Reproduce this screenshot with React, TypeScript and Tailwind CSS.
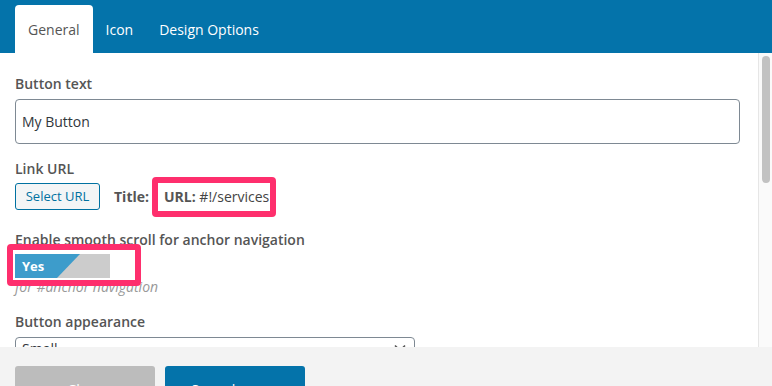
import React from 'react';

const tabs = ['General', 'Icon', 'Design Options'];

export default function App() {
  return (
    <div className="h-[386px] w-[772px] overflow-hidden bg-white flex flex-col font-['Open_Sans',sans-serif] text-[14px]">
      {/* Tabs */}
      <div className="h-[53px] shrink-0 bg-[#0473aa] flex items-end pl-[15px]">
        {tabs.map((tab, i) => (
          <div
            key={tab}
            className={`h-[48px] px-[13px] flex items-center rounded-t-[4px] ${
              i === 0 ? 'bg-white text-[#555]' : 'text-white'
            }`}
          >
            {tab}
          </div>
        ))}
      </div>

      {/* Body */}
      <div className="h-[294px] shrink-0 flex overflow-hidden">
        <div className="flex-1 pl-[15px] pr-[18px] pt-[21px]">
          <label className="block leading-[20px] font-semibold text-[#555]">Button text</label>
          <div className="mt-[5px] h-[45px] border border-[#7e8993] rounded-[4px] flex items-center px-[6px] text-[#32373c]">
            My Button
          </div>

          <label className="block mt-[15px] leading-[20px] font-semibold text-[#555]">Link URL</label>
          <div className="mt-[4px] flex items-center h-[27px]">
            <button className="h-[27px] w-[85px] border border-[#0071a1] bg-[#f3f5f6] text-[#0071a1] text-[13px] rounded-[3px]">
              Select URL
            </button>
            <span className="ml-[14px] font-bold text-[#555]">Title:</span>
            <span className="relative ml-[15px] text-[#444]">
              <span className="font-bold text-[#555]">URL:</span> #!/services
              <span className="pointer-events-none absolute -left-[12px] -right-[7px] -top-[9px] -bottom-[10px] border-[6px] border-[#fe2f6d] rounded-[4px]" />
            </span>
          </div>

          <label className="block mt-[20px] leading-[20px] font-semibold text-[#555]">
            Enable smooth scroll for anchor navigation
          </label>
          <div className="relative mt-[4px]">
            <div className="relative h-[24px] w-[95px] bg-[#cccccc]">
              <div className="absolute inset-0 bg-[#3d9ccb] [clip-path:polygon(0_0,65px_0,42px_100%,0_100%)]" />
              <span className="absolute left-[7px] top-0 leading-[24px] text-[13px] font-bold text-white">Yes</span>
            </div>
            <div className="leading-[18px] italic text-[#999]">for #anchor navigation</div>
            <div className="pointer-events-none absolute left-[-8px] top-[-10px] w-[134px] h-[42px] border-[6px] border-[#fe2f6d] rounded-[4px]" />
          </div>

          <label className="block mt-[16px] leading-[20px] font-semibold text-[#555]">Button appearance</label>
          <div className="relative mt-[5px] h-[40px] w-[400px] border border-[#7e8993] rounded-[4px] px-[6px] pt-[1px] leading-[20px] text-[#32373c]">
            Small
            <svg className="absolute right-[8px] top-[6px]" width="12" height="8" viewBox="0 0 12 8" fill="none">
              <path d="M1 1.5l5 5 5-5" stroke="#555" strokeWidth="1.6" />
            </svg>
          </div>
        </div>

        {/* Scrollbar */}
        <div className="w-[14px] shrink-0 bg-[#fafafa] border-l border-[#e6e6e6] pt-[3px] pl-[3px]">
          <div className="w-[8px] h-[127px] rounded-full bg-[#c2c2c2]" />
        </div>
      </div>

      {/* Footer */}
      <div className="flex-1 bg-[#f3f3f3] pl-[15px] pt-[19px] flex items-start gap-[10px]">
        <button className="shrink-0 h-[46px] w-[140px] rounded-[3px] bg-[#bcbcbc] text-white">Close</button>
        <button className="shrink-0 h-[46px] w-[140px] rounded-[3px] bg-[#0473aa] text-white">Save changes</button>
      </div>
    </div>
  );
}
